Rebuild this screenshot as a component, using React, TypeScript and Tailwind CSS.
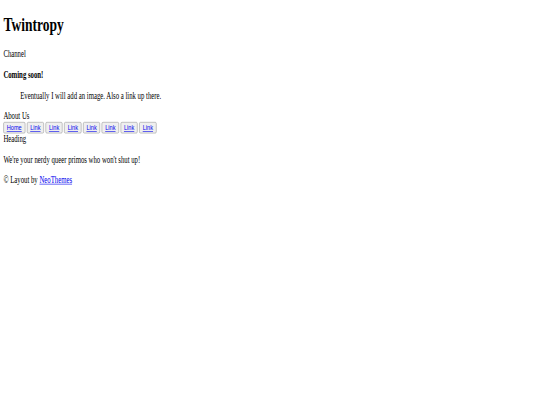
export default function App() {
  const links = ['Home', 'Link', 'Link', 'Link', 'Link', 'Link', 'Link', 'Link'];

  return (
    <div className="h-[405px] w-[540px] overflow-hidden bg-white">
      <div className="w-[1280px] origin-top-left scale-x-[0.421875] scale-y-[0.6] px-2 pb-2 text-[16px] leading-[1.15] text-black font-['Liberation_Serif',serif]">
        <h1 className="mt-[14px] mb-[21.44px] text-[32px] font-bold leading-[1.15]">Twintropy</h1>
        <div>Channel</div>
        <p className="my-4 font-bold">Coming soon!</p>
        <blockquote className="mx-10 my-4">Eventually I will add an image. Also a link up there.</blockquote>
        <div>About Us</div>
        <div className="flex gap-1">
          {links.map((l, i) => (
            <button
              key={i}
              className="rounded-[3px] border border-[#8f8f8f] bg-[#efefef] px-[7px] py-[1px] text-[13.33px] leading-[1.15] font-['Liberation_Sans',sans-serif]"
            >
              <a href="#" className="text-[#0000ee] underline">
                {l}
              </a>
            </button>
          ))}
        </div>
        <div>Heading</div>
        <p className="my-4">We're your nerdy queer primos who won't shut up!</p>
        <p className="my-4">
          © Layout by{' '}
          <a href="#" className="text-[#0000ee] underline">
            NeoThemes
          </a>
        </p>
      </div>
    </div>
  );
}
